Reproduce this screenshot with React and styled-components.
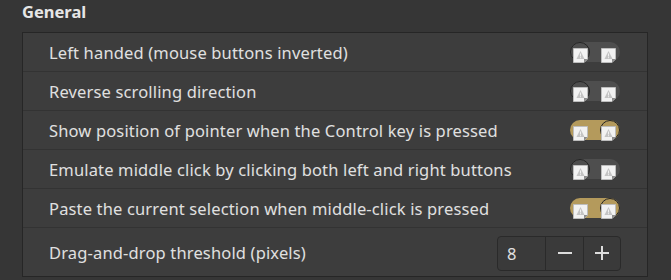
import React from "react";
import styled, { createGlobalStyle } from "styled-components";

const Global = createGlobalStyle`
  html, body { margin: 0; padding: 0; background: #363636; }
  body { width: 671px; height: 280px; overflow: hidden; font-family: "Noto Sans", "Open Sans", sans-serif; }
`;

const Page = styled.div`
  padding: 0 23px 0 22px;
  height: 280px;
  box-sizing: border-box;
  background: #363636;
`;

const Title = styled.div`
  font-weight: 700;
  font-size: 16.5px;
  color: #e6e6e6;
  height: 32px;
  line-height: 24px;
`;

const Panel = styled.div`
  border: 1px solid #262626;
  background: #3d3d3d;
  display: flex;
  flex-direction: column;
`;

const Row = styled.div`
  display: flex;
  align-items: center;
  justify-content: space-between;
  height: ${(p) => p.$h || 38}px;
  padding: 0 27px 0 26px;
  border-top: ${(p) => (p.$first ? "none" : "1px solid #333333")};
  color: #e0e0e0;
  font-size: 16.5px;
`;

const Label = styled.span`
  letter-spacing: 0.15px;
`;

const Track = styled.div`
  position: relative;
  width: 50px;
  height: 20px;
  border-radius: 10px;
  background: ${(p) => (p.$on ? "#b49a5c" : "#4e4e4e")};
  display: flex;
  align-items: center;
  justify-content: space-between;
  padding: 0 4px 0 3px;
  box-sizing: border-box;
`;

const Knob = styled.div`
  position: absolute;
  top: 0;
  left: ${(p) => (p.$on ? "30px" : "0")};
  width: 20px;
  height: 20px;
  border-radius: 50%;
  box-sizing: border-box;
  border: 1.5px solid #242424;
`;

const IconWrap = styled.div`
  position: relative;
  width: 15px;
  height: 15px;
  z-index: 1;
`;

const Broken = () => (
  <IconWrap>
    <svg width="15" height="15" viewBox="0 0 15 15">
      <path d="M0.5 0.5 H14.5 V11 L11 14.5 H0.5 Z" fill="#f2f2f2" stroke="#bdbdbd" />
      <path d="M7.5 3 L11.5 11 H3.5 Z" fill="#c4c4c4" />
      <rect x="7" y="5.5" width="1" height="3" fill="#f2f2f2" />
      <rect x="7" y="9.2" width="1" height="1" fill="#f2f2f2" />
      <path d="M11 14.5 V11 H14.5 Z" fill="#8a8a8a" />
    </svg>
  </IconWrap>
);

const Switch = ({ on }) => (
  <Track $on={on}>
    <Knob $on={on} />
    <Broken />
    <Broken />
  </Track>
);

const Spin = styled.div`
  display: flex;
  height: 35px;
  border: 1px solid #2a2a2a;
  border-radius: 4px;
  box-sizing: border-box;
  background: #3a3a3a;
  margin-right: -1px;
  margin-top: 2px;
`;

const SpinValue = styled.div`
  width: 48px;
  padding-left: 9px;
  box-sizing: border-box;
  display: flex;
  align-items: center;
  font-size: 16.5px;
  color: #e0e0e0;
  border-right: 1px solid #2a2a2a;
`;

const SpinButton = styled.div`
  width: ${(p) => p.$w}px;
  display: flex;
  align-items: center;
  justify-content: center;
  border-right: ${(p) => (p.$last ? "none" : "1px solid #2a2a2a")};
`;

const Minus = () => (
  <svg width="16" height="16" viewBox="0 0 16 16">
    <rect x="1" y="7" width="14" height="2" fill="#dcdcdc" />
  </svg>
);
const Plus = () => (
  <svg width="16" height="16" viewBox="0 0 16 16">
    <rect x="1" y="7" width="14" height="2" fill="#dcdcdc" />
    <rect x="7" y="1" width="2" height="14" fill="#dcdcdc" />
  </svg>
);

const rows = [
  ["Left handed (mouse buttons inverted)", false],
  ["Reverse scrolling direction", false],
  ["Show position of pointer when the Control key is pressed", true],
  ["Emulate middle click by clicking both left and right buttons", false],
  ["Paste the current selection when middle-click is pressed", true],
];

export default function App() {
  return (
    <Page>
      <Global />
      <Title>General</Title>
      <Panel>
        {rows.map(([t, on], i) => (
          <Row key={t} $first={i === 0}>
            <Label>{t}</Label>
            <Switch on={on} />
          </Row>
        ))}
        <Row $h={48}>
          <Label>Drag-and-drop threshold (pixels)</Label>
          <Spin>
            <SpinValue>8</SpinValue>
            <SpinButton $w={37}><Minus /></SpinButton>
            <SpinButton $w={36} $last><Plus /></SpinButton>
          </Spin>
        </Row>
      </Panel>
    </Page>
  );
}
